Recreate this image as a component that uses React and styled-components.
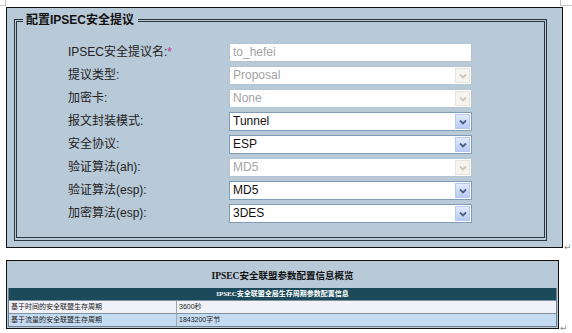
import React from 'react';
import styled, { createGlobalStyle } from 'styled-components';

const Global = createGlobalStyle`
  html, body {
    margin: 0;
    padding: 0;
    background: #ffffff;
  }
  body {
    font-family: "Liberation Sans", "Noto Sans CJK SC", sans-serif;
    font-size: 12px;
    color: #1e1e1e;
  }
`;

const Page = styled.div`
  position: relative;
  width: 572px;
  height: 333px;
  padding: 7px 0 0 6px;
  box-sizing: border-box;
  overflow: hidden;
`;

// word style crop marks in the corners
const CropMark = styled.div`
  position: absolute;
  top: 0;
  width: 12px;
  height: 5px;
  border-bottom: 1px solid #c4c4c4;
  ${p => (p.right ? 'left: 560px; border-left: 1px solid #c4c4c4;' : 'left: -7px; border-right: 1px solid #c4c4c4;')}
`;

const Line = styled.div`
  display: flex;
  align-items: flex-end;
  margin-top: ${p => p.gap || 0}px;
`;

const ReturnMark = styled.span`
  font-family: "DejaVu Sans", sans-serif;
  font-size: 9px;
  line-height: 9px;
  color: #8a8a8a;
  margin-left: 1px;
  margin-bottom: -4px;
`;

const Panel = styled.div`
  width: ${p => p.w}px;
  box-sizing: border-box;
  background: #b8c9d8;
  border: 1px solid #111;
  padding: ${p => p.pad};
`;

const Fieldset = styled.fieldset`
  margin: 0;
  padding: 16px 0 14px 0;
  border: 3px double #2e343b;
  border-bottom-width: 4px;
  min-width: 0;
`;

const Legend = styled.legend`
  margin-left: 6px;
  padding: 0 4px 0 3px;
  font-weight: bold;
  font-size: 12px;
  line-height: 14px;
  color: #111;
`;

const Form = styled.div`
  display: grid;
  grid-template-columns: 161px 243px;
  row-gap: 4px;
  align-items: center;
  padding-left: 51px;
`;

const Label = styled.div`
  font-size: 12px;
  line-height: 19px;
  color: #222;
  white-space: nowrap;
`;

const Star = styled.span`
  color: #c0348e;
`;

const Field = styled.div`
  position: relative;
  height: 19px;
  box-sizing: border-box;
  background: #fff;
  border: 1px solid ${p => (p.disabled ? '#b4c4d2' : '#7f9db9')};
  padding-left: 3px;
  font-size: 12px;
  line-height: 17px;
  color: ${p => (p.disabled ? '#a3a3a3' : '#111')};
  display: flex;
  align-items: center;
  justify-content: space-between;
`;

const Arrow = styled.div`
  width: 15px;
  height: 15px;
  margin-right: 1px;
  box-sizing: border-box;
  border: 1px solid ${p => (p.disabled ? '#e6e4dc' : '#b6c8f2')};
  background: ${p =>
    p.disabled
      ? '#f5f4ef'
      : 'linear-gradient(#e2eafd, #b9ccf6)'};
  display: flex;
  align-items: center;
  justify-content: center;
`;

function Chevron({ disabled }) {
  return (
    <svg width="8" height="6" viewBox="0 0 8 6">
      <path
        d="M1 1.5 L4 4.5 L7 1.5"
        fill="none"
        stroke={disabled ? '#c9c7b8' : '#4d6185'}
        strokeWidth="1.8"
      />
    </svg>
  );
}

function Select({ value, disabled }) {
  return (
    <Field disabled={disabled}>
      <span>{value}</span>
      <Arrow disabled={disabled}>
        <Chevron disabled={disabled} />
      </Arrow>
    </Field>
  );
}

const Title = styled.div`
  height: 27px;
  display: flex;
  align-items: center;
  justify-content: center;
  font-family: "Liberation Serif", "Noto Sans CJK SC", serif;
  font-weight: bold;
  font-size: 9.5px;
  color: #111;
`;

const Table = styled.div`
  display: grid;
  grid-template-columns: 167px 1fr;
  background: #fff;
  border: 1px solid #6d7f8e;
  border-top: none;
`;

const HeadCell = styled.div`
  grid-column: 1 / 3;
  height: 12px;
  background: #1b4b5b;
  color: #fff;
  font-family: "Liberation Serif", "Noto Sans CJK SC", serif;
  font-weight: bold;
  font-size: 7px;
  line-height: 12px;
  text-align: center;
`;

const Cell = styled.div`
  height: 12px;
  background: ${p => (p.alt ? '#c5dbf1' : '#f1f1f8')};
  border-top: 1px solid #7f909e;
  border-left: ${p => (p.second ? '1px solid #9aa7b3' : 'none')};
  font-size: 7px;
  line-height: 12px;
  padding-left: 2px;
  color: #222;
  white-space: nowrap;
`;

const rows = [
  { label: '提议类型:', value: 'Proposal', disabled: true },
  { label: '加密卡:', value: 'None', disabled: true },
  { label: '报文封装模式:', value: 'Tunnel' },
  { label: '安全协议:', value: 'ESP' },
  { label: '验证算法(ah):', value: 'MD5', disabled: true },
  { label: '验证算法(esp):', value: 'MD5' },
  { label: '加密算法(esp):', value: '3DES' }
];

const lifetimes = [
  ['基于时间的安全联盟生存周期', '3600秒'],
  ['基于流量的安全联盟生存周期', '1843200字节']
];

export default function App() {
  return (
    <Page>
      <Global />
      <CropMark />
      <CropMark right />
      <Line>
        <Panel w={557} pad="5px 15px 6px 7px">
          <Fieldset>
            <Legend>配置IPSEC安全提议</Legend>
            <Form>
              <Label>
                IPSEC安全提议名:<Star>*</Star>
              </Label>
              <Field disabled>to_hefei</Field>
              {rows.map(r => (
                <React.Fragment key={r.label}>
                  <Label>{r.label}</Label>
                  <Select value={r.value} disabled={r.disabled} />
                </React.Fragment>
              ))}
            </Form>
          </Fieldset>
        </Panel>
        <ReturnMark>↵</ReturnMark>
      </Line>
      <Line gap={12}>
        <Panel w={553} pad="0 1px 1px 1px">
          <Title>IPSEC安全联盟参数配置信息概览</Title>
          <Table>
            <HeadCell>IPSEC安全联盟全局生存周期参数配置信息</HeadCell>
            {lifetimes.map(([name, val], i) => (
              <React.Fragment key={name}>
                <Cell alt={i === 1}>{name}</Cell>
                <Cell alt={i === 1} second>
                  {val}
                </Cell>
              </React.Fragment>
            ))}
          </Table>
        </Panel>
        <ReturnMark>↵</ReturnMark>
      </Line>
    </Page>
  );
}
